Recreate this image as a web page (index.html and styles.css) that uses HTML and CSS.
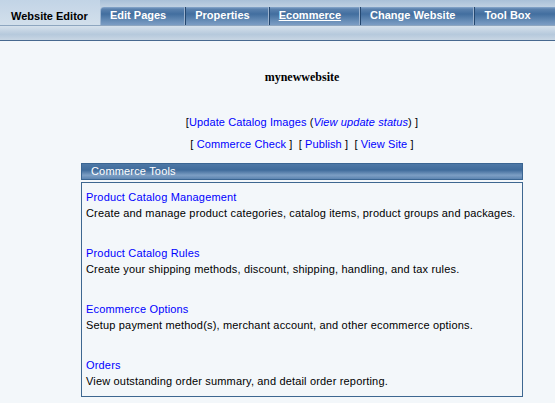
FILE: index.html
```html
<!DOCTYPE html>
<html>
<head>
<meta charset="utf-8">
<link rel="stylesheet" href="styles.css">
</head>
<body>
<div class="topbar">
  <div class="tab active">Website Editor</div>
  <div class="tabs">
    <div class="tab">Edit Pages</div>
    <div class="tab">Properties</div>
    <div class="tab"><u>Ecommerce</u></div>
    <div class="tab">Change Website</div>
    <div class="tab last">Tool Box</div>
  </div>
</div>
<div class="subbar"></div>
<div class="content">
  <div class="sitename">mynewwebsite</div>
  <div class="links l1">[<a href="#">Update Catalog Images</a> (<a href="#"><i>View update status</i></a>) ]</div>
  <div class="links l2">[ <a href="#">Commerce Check</a> ]&nbsp; [ <a href="#">Publish</a> ]&nbsp; [ <a href="#">View Site</a> ]</div>
  <div class="panel">
    <div class="panel-head">Commerce Tools</div>
    <div class="panel-body">
      <div class="item"><a href="#">Product Catalog Management</a><div>Create and manage product categories, catalog items, product groups and packages.</div></div>
      <div class="item"><a href="#">Product Catalog Rules</a><div>Create your shipping methods, discount, shipping, handling, and tax rules.</div></div>
      <div class="item"><a href="#">Ecommerce Options</a><div>Setup payment method(s), merchant account, and other ecommerce options.</div></div>
      <div class="item"><a href="#">Orders</a><div>View outstanding order summary, and detail order reporting.</div></div>
    </div>
  </div>
</div>
</body>
</html>
```
FILE: styles.css
```css
html, body { margin: 0; padding: 0; }
body {
  background: #f3f7fa;
  font-family: "Liberation Sans", Arial, sans-serif;
  font-size: 11px;
  color: #000;
  overflow: hidden;
}
a { color: #0000ff; text-decoration: none; }
.topbar {
  height: 25px;
  display: flex;
  background: linear-gradient(#a9c0d8, #c9d8e6 40%, #d4e0ec);
}
.tab.active {
  width: 100px;
  flex-shrink: 0;
  box-sizing: border-box;
  padding: 10px 0 0 11px;
  color: #000;
  font-weight: bold;
  font-size: 11px;
  line-height: 13px;
  background: linear-gradient(#c2d4e6, #d2dfeb);
  border: none;
  box-shadow: none;
}
.tabs {
  display: flex;
  margin-top: 7px;
  height: 18px;
  flex: 1;
  border-top-left-radius: 4px;
  background: linear-gradient(#8aa9cc 0px, #5b82ae 2px, #426e9f 7px, #6e92bb 15px, #7c9dc4);
  border-left: 1px solid #9db6d2;
}
.tab {
  padding: 0 19px 0 9px;
  color: #fff;
  font-weight: bold;
  font-size: 11px;
  line-height: 17px;
  border-right: 1px solid #24476f;
  box-shadow: inset -1px 0 0 #9cb3cf;
  white-space: nowrap;
  flex-shrink: 0;
}
.tab.last { border-right: none; box-shadow: none; }
.tab u { text-decoration: underline; }
.subbar {
  height: 14px;
  border-top: 1px solid #8ea6c0;
  background: linear-gradient(#d6e1ec, #b6c9dc 60%, #c8d6e4);
  border-bottom: 1px solid #47698f;
}
.content {
  width: 442px;
  margin-left: 81px;
  text-align: center;
  letter-spacing: 0.17px;
}
.sitename {
  font-family: "Liberation Serif", "Times New Roman", serif;
  font-weight: bold;
  font-size: 12px;
  letter-spacing: 0;
  margin-top: 29px;
  line-height: 14px;
}
.links { line-height: 14px; letter-spacing: 0.1px; }
.l1 { margin-top: 31px; }
.l2 { margin-top: 8px; }
.panel { margin-top: 12px; text-align: left; }
.panel-head {
  height: 15px;
  border: 1px solid #3a6592;
  background: linear-gradient(#4d78a6, #3f6b9b 40%, #7d9fc4 75%, #5d85b1);
  color: #fff;
  line-height: 15px;
  padding-left: 9px;
}
.panel-body {
  margin-top: 2px;
  border: 1px solid #3d6790;
  height: 207px;
  padding: 6px 0 0 4px;
}
.item { line-height: 16px; height: 56px; }
```
